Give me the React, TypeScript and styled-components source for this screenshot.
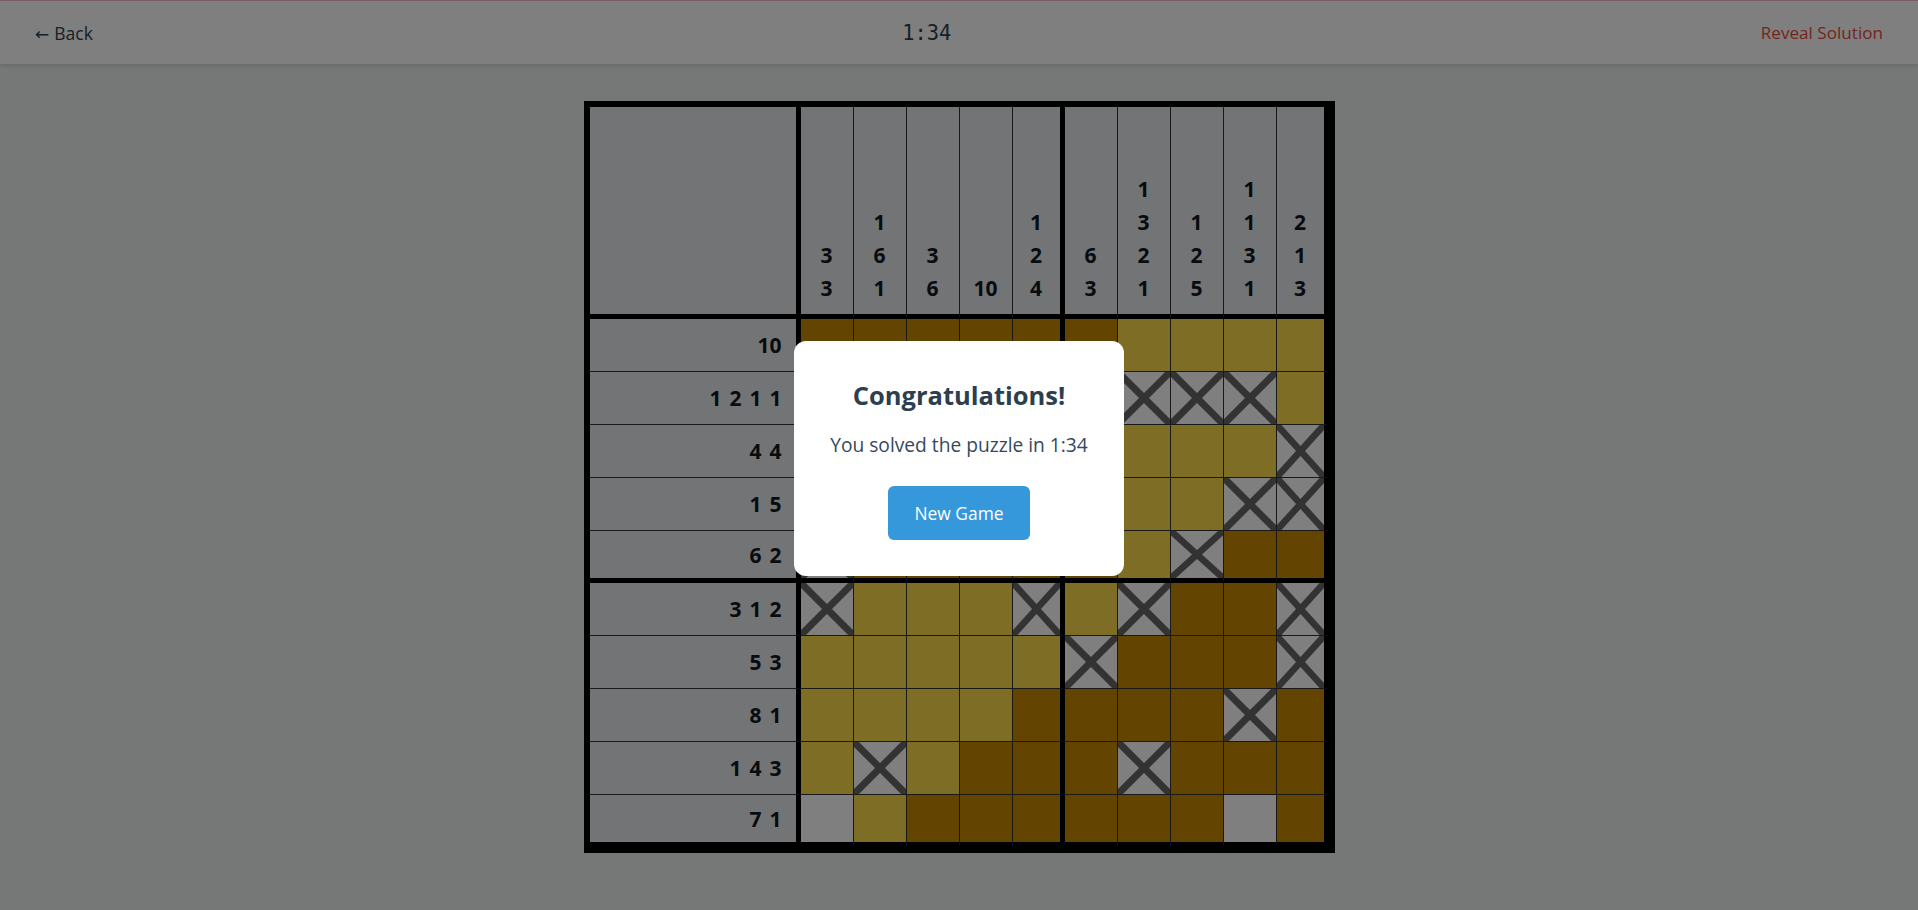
import styled, { createGlobalStyle } from 'styled-components'

const GlobalStyle = createGlobalStyle`
  * {
    box-sizing: border-box;
  }
  body {
    margin: 0;
    background: #ecf0f1;
    font-family: 'Open Sans', 'Noto Sans', sans-serif;
    color: #2c3e50;
  }
`

type CellState = 'D' | 'O' | 'X' | 'E'

const colClues: number[][] = [
  [3, 3],
  [1, 6, 1],
  [3, 6],
  [10],
  [1, 2, 4],
  [6, 3],
  [1, 3, 2, 1],
  [1, 2, 5],
  [1, 1, 3, 1],
  [2, 1, 3],
]

const rowClues: number[][] = [
  [10],
  [1, 2, 1, 1],
  [4, 4],
  [1, 5],
  [6, 2],
  [3, 1, 2],
  [5, 3],
  [8, 1],
  [1, 4, 3],
  [7, 1],
]

// D / O = filled (two shades), X = crossed out, E = untouched
const board: CellState[][] = [
  'DDDDDDOOOO',
  'DXDDXDXXXO',
  'DDDDXDOOOX',
  'XDXDDDOOXX',
  'XDDDDDOXDD',
  'XOOOXOXDDX',
  'OOOOOXDDDX',
  'OOOODDDDXD',
  'OXODDDXDDD',
  'EODDDDDDED',
].map((r) => r.split('') as CellState[])

const fills: Record<CellState, string> = {
  D: '#c68800',
  O: '#fcdc4a',
  X: '#ffffff',
  E: '#ffffff',
}

const Header = styled.header`
  display: flex;
  justify-content: space-between;
  align-items: center;
  height: 64px;
  padding: 0 35px;
  background: #ffffff;
  border-top: 1px solid #f3b9c2;
  box-shadow: 0 2px 4px rgba(0, 0, 0, 0.12);
`

const NavLink = styled.button<{ $danger?: boolean }>`
  border: none;
  background: none;
  padding: 0;
  font-family: inherit;
  font-size: ${(p) => (p.$danger ? '17.1px' : '17.5px')};
  color: ${(p) => (p.$danger ? '#e74c3c' : '#2c3e50')};
  cursor: pointer;
`

const Arrow = styled.span`
  font-family: 'DejaVu Sans', sans-serif;
  font-size: 17px;
  margin-right: 5px;
`

const Timer = styled.div`
  font-family: 'DejaVu Sans Mono', 'Liberation Mono', monospace;
  font-size: 20.4px;
  color: #2c3e50;
`

const Main = styled.main`
  display: flex;
  justify-content: center;
  padding-top: 37px;
`

const colWidths = [211, 53, 53, 53, 53, 52, 53, 53, 53, 53, 52]
const rowHeights = [212, 53, 53, 53, 53, 52, 53, 53, 53, 53, 52]

const Board = styled.div`
  display: grid;
  grid-template-columns: ${colWidths.map((w) => `${w}px`).join(' ')};
  grid-template-rows: ${rowHeights.map((h) => `${h}px`).join(' ')};
  border: 6px solid #000;
  background: #000;
`

const GridCell = styled.div<{ $thickRight?: boolean; $thickBottom?: boolean }>`
  border-right: ${(p) => (p.$thickRight ? '5px solid #000' : '1px solid #333')};
  border-bottom: ${(p) => (p.$thickBottom ? '5px solid #000' : '1px solid #333')};
`

const Corner = styled(GridCell)`
  background: #e5e8eb;
`

const ColClue = styled(GridCell)`
  display: flex;
  flex-direction: column;
  justify-content: flex-end;
  align-items: center;
  padding-bottom: 9px;
  background: #e5e8eb;
  font-weight: 700;
  font-size: 21px;
  line-height: 33px;
  color: #111820;
`

const RowClue = styled(GridCell)`
  display: flex;
  justify-content: flex-end;
  align-items: center;
  gap: 8px;
  padding-right: 14px;
  background: #e5e8eb;
  font-weight: 700;
  font-size: 21px;
  color: #111820;
`

const Square = styled(GridCell)<{ $state: CellState }>`
  position: relative;
  overflow: hidden;
  background: ${(p) => fills[p.$state]};
`

const Cross = styled.svg`
  display: block;
  width: 100%;
  height: 100%;
`

const Overlay = styled.div`
  position: fixed;
  inset: 0;
  display: flex;
  align-items: center;
  justify-content: center;
  padding-top: 6px;
  background: rgba(0, 0, 0, 0.5);
`

const Modal = styled.div`
  width: 330px;
  padding: 37px 20px 36px;
  background: #ffffff;
  border-radius: 12px;
  text-align: center;
`

const Title = styled.h2`
  margin: 0;
  font-size: 25.5px;
  font-weight: 700;
  line-height: 34px;
  color: #2c3e50;
`

const Message = styled.p`
  margin: 20px 0 0;
  font-size: 19.2px;
  line-height: 26px;
  color: #34495e;
`

const PrimaryButton = styled.button`
  margin-top: 28px;
  height: 54px;
  padding: 0 26px;
  border: none;
  border-radius: 6px;
  background: #3498db;
  color: #ffffff;
  font-family: inherit;
  font-size: 17.4px;
  cursor: pointer;
`

const XMark = () => (
  <Cross viewBox="0 0 52 52" preserveAspectRatio="none">
    <line x1="0" y1="0" x2="52" y2="52" stroke="#666" strokeWidth="7" />
    <line x1="52" y1="0" x2="0" y2="52" stroke="#666" strokeWidth="7" />
  </Cross>
)

export default function App() {
  return (
    <>
      <GlobalStyle />
      <Header>
        <NavLink>
          <Arrow>←</Arrow>Back
        </NavLink>
        <Timer>1:34</Timer>
        <NavLink $danger>Reveal Solution</NavLink>
      </Header>
      <Main>
        <Board>
          <Corner $thickRight $thickBottom />
          {colClues.map((clue, c) => (
            <ColClue key={`c${c}`} $thickRight={c % 5 === 4} $thickBottom>
              {clue.map((n, i) => (
                <span key={i}>{n}</span>
              ))}
            </ColClue>
          ))}
          {board.map((row, r) => [
            <RowClue key={`r${r}`} $thickRight $thickBottom={r % 5 === 4}>
              {rowClues[r].map((n, i) => (
                <span key={i}>{n}</span>
              ))}
            </RowClue>,
            ...row.map((state, c) => (
              <Square
                key={`${r}-${c}`}
                $state={state}
                $thickRight={c % 5 === 4}
                $thickBottom={r % 5 === 4}
              >
                {state === 'X' && <XMark />}
              </Square>
            )),
          ])}
        </Board>
      </Main>
      <Overlay>
        <Modal>
          <Title>Congratulations!</Title>
          <Message>You solved the puzzle in 1:34</Message>
          <PrimaryButton>New Game</PrimaryButton>
        </Modal>
      </Overlay>
    </>
  )
}
